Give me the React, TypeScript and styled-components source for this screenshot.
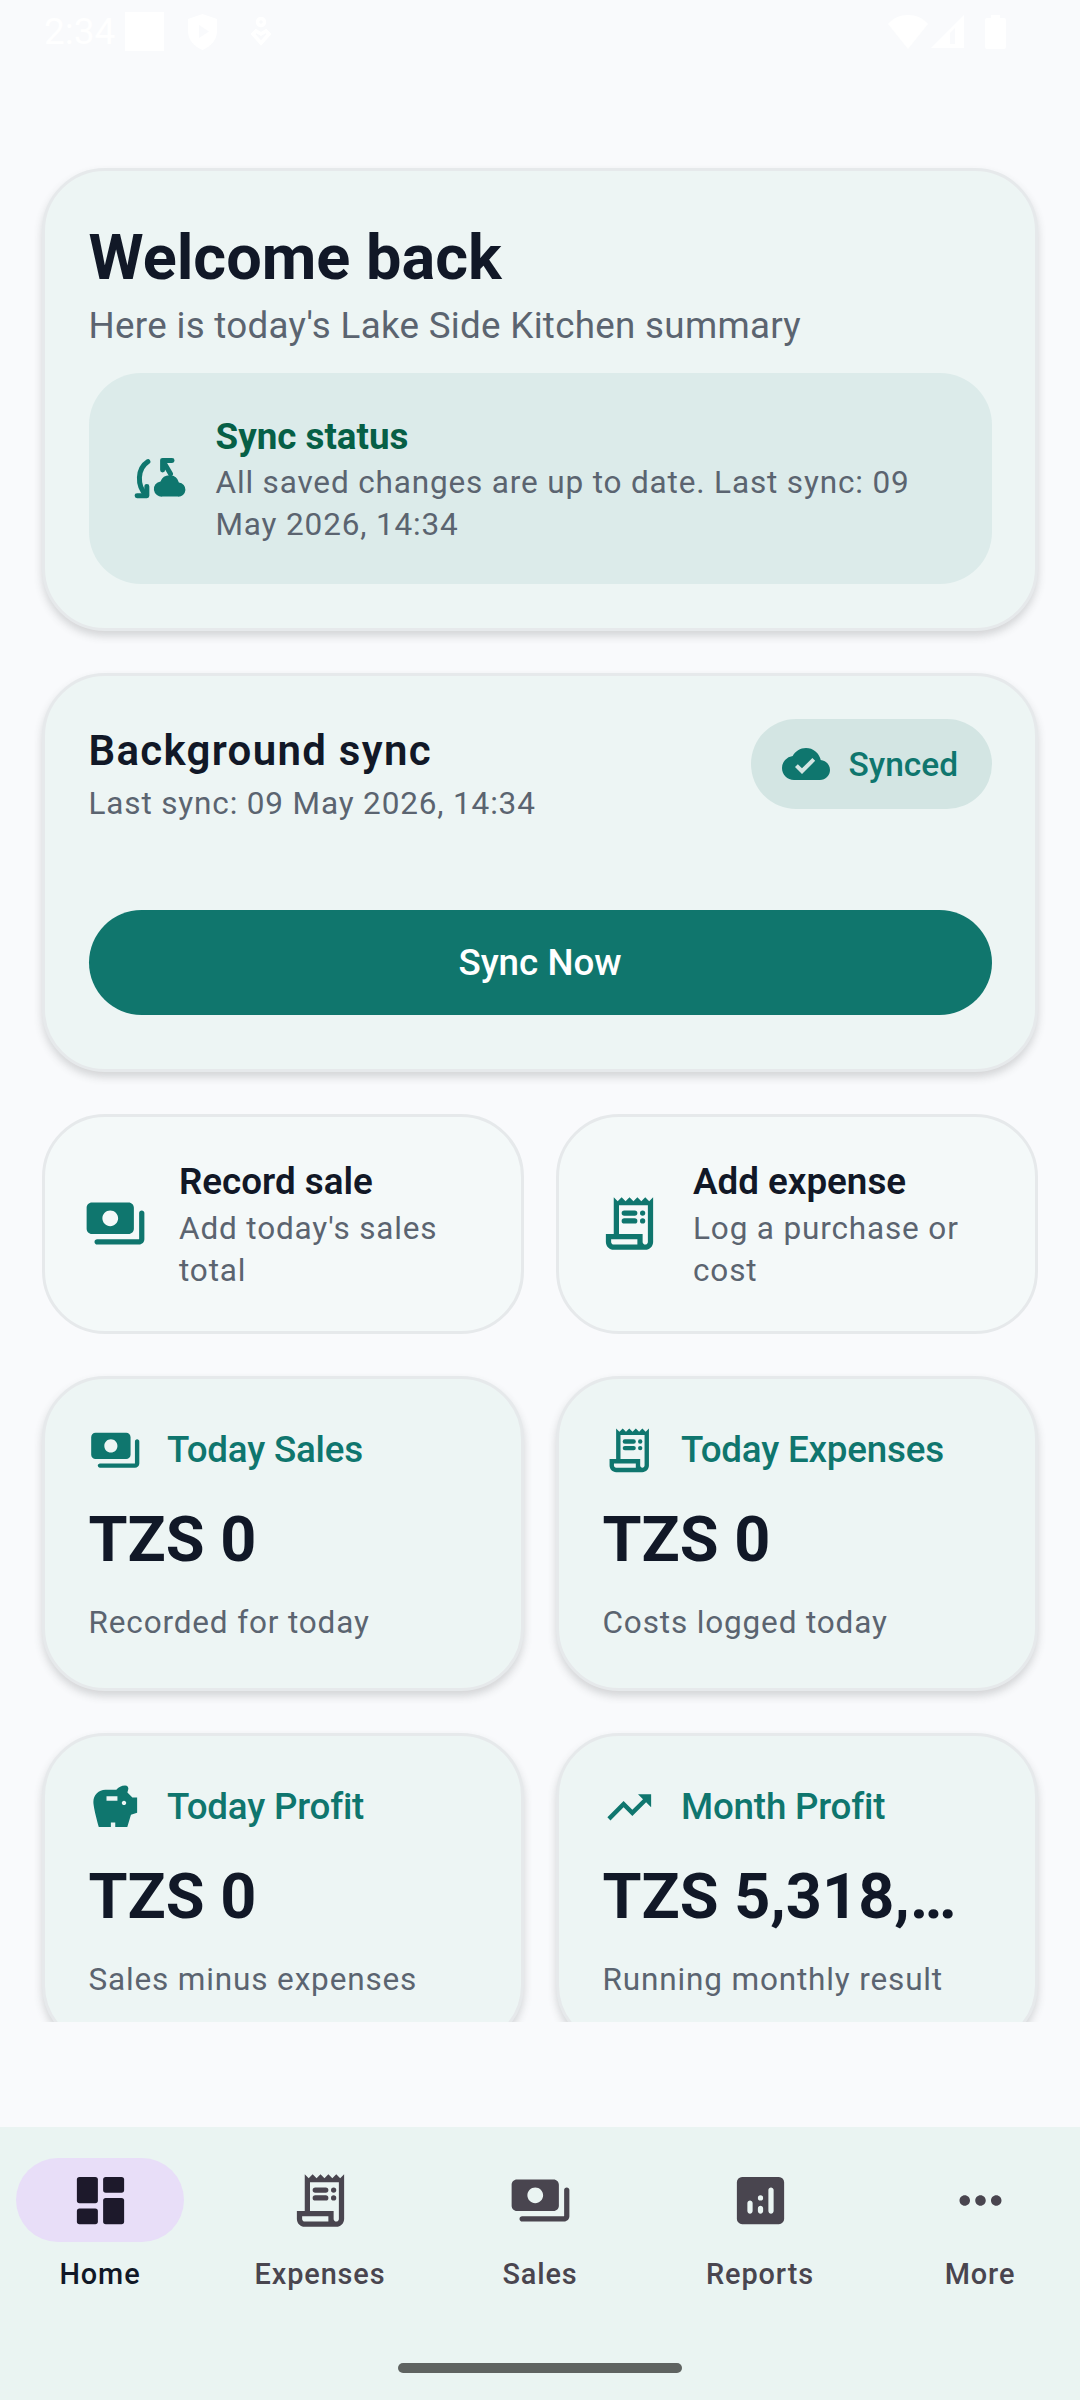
import React from "react";
import styled, { createGlobalStyle } from "styled-components";
import { MdCloudDone, MdMoreHoriz, MdSavings, MdTrendingUp } from "react-icons/md";

const teal = "#0F766E";
const ink = "#111827";
const muted = "#5B6470";
const navInk = "#49454F";

const GlobalStyle = createGlobalStyle`
  html, body {
    margin: 0;
    padding: 0;
    background: #f9fafc;
    font-family: Roboto, "Noto Sans", sans-serif;
  }
  * {
    box-sizing: border-box;
  }
  svg {
    flex-shrink: 0;
  }
`;

type IconProps = { size?: number };

const PaymentsIcon = ({ size = 63 }: IconProps) => (
  <svg width={size} height={size} viewBox="0 0 24 24" fill="currentColor">
    <path d="M19 14V6c0-1.1-.9-2-2-2H3c-1.1 0-2 .9-2 2v8c0 1.1.9 2 2 2h14c1.1 0 2-.9 2-2zm-9-1c-1.66 0-3-1.34-3-3s1.34-3 3-3 3 1.34 3 3-1.34 3-3 3zM23 8v10c0 1.1-.9 2-2 2H5c-.55 0-1-.45-1-1s.45-1 1-1h16V8c0-.55.45-1 1-1s1 .45 1 1z" />
  </svg>
);

const ReceiptIcon = ({ size = 63 }: IconProps) => (
  <svg width={size} height={size} viewBox="0 0 24 24" fill="currentColor">
    <path d="M19.5 3.5 18 2l-1.5 1.5L15 2l-1.5 1.5L12 2l-1.5 1.5L9 2 7.5 3.5 6 2v14H3v3c0 1.66 1.34 3 3 3h12c1.66 0 3-1.34 3-3V2l-1.5 1.5zM15 20H6c-.55 0-1-.45-1-1v-1h10v3zm4-1c0 .55-.45 1-1 1s-1-.45-1-1v-3H8V5h11v14z" />
    <rect x="9" y="7" width="6" height="2" rx="1" />
    <circle cx="17" cy="8" r="1" />
    <rect x="9" y="10" width="6" height="2" rx="1" />
    <circle cx="17" cy="11" r="1" />
  </svg>
);

const SyncCloudIcon = ({ size = 63 }: IconProps) => (
  <svg width={size} height={size} viewBox="0 0 24 24" fill="none" stroke="currentColor" strokeWidth="1.9" strokeLinecap="round" strokeLinejoin="round">
    <path d="M7.2 5.6C3.2 8.2 2.8 14.6 6.6 18.4" />
    <path d="M3.1 18.6h3.7v-3.6" />
    <path d="M16.4 5.1h-3.6v3.7M12.9 5.2l2.9 5" />
    <path d="M12.8 18.9h5.8a2.7 2.7 0 0 0 .4-5.4 3.7 3.7 0 0 0-7-.4 2.9 2.9 0 0 0 .8 5.8z" fill="currentColor" stroke="none" />
  </svg>
);

const DashboardIcon = ({ size = 63 }: IconProps) => (
  <svg width={size} height={size} viewBox="0 0 24 24" fill="currentColor">
    <rect x="3" y="3" width="8" height="10" rx="1" />
    <rect x="3" y="15" width="8" height="6" rx="1" />
    <rect x="13" y="3" width="8" height="6" rx="1" />
    <rect x="13" y="11" width="8" height="10" rx="1" />
  </svg>
);

const AnalyticsIcon = ({ size = 63 }: IconProps) => (
  <svg width={size} height={size} viewBox="0 0 24 24" fill="currentColor">
    <path
      fillRule="evenodd"
      d="M5 3h14a2 2 0 0 1 2 2v14a2 2 0 0 1-2 2H5a2 2 0 0 1-2-2V5a2 2 0 0 1 2-2zm3 9c-.5 0-1 .4-1 1v3c0 .6.5 1 1 1s1-.4 1-1v-3c0-.6-.5-1-1-1zm4 2c-.5 0-1 .4-1 1v1c0 .6.5 1 1 1s1-.4 1-1v-1c0-.6-.5-1-1-1zm0-4a1 1 0 1 0 0 2 1 1 0 0 0 0-2zm4-3c-.5 0-1 .4-1 1v8c0 .6.5 1 1 1s1-.4 1-1V8c0-.6-.5-1-1-1z"
    />
  </svg>
);

const Screen = styled.div`
  width: 1080px;
  height: 2400px;
  display: flex;
  flex-direction: column;
  overflow: hidden;
  background: #f9fafc;
`;

const StatusBar = styled.div`
  height: 63px;
  flex-shrink: 0;
  padding: 0 74px 0 44px;
  display: flex;
  align-items: center;
  justify-content: space-between;
  color: #ffffff;
`;

const StatusGroup = styled.div<{ $gap: number }>`
  display: flex;
  align-items: center;
  gap: ${(p) => p.$gap}px;
`;

const StatusTime = styled.span`
  font-size: 37px;
  font-weight: 400;
  line-height: 44px;
`;

const StatusSquare = styled.div`
  width: 39px;
  height: 39px;
  background: #ffffff;
`;

const StatusFigure = styled.svg`
  margin-left: 10px;
`;

const StatusSignal = styled.svg`
  margin-right: 18px;
`;

const Content = styled.main`
  height: 1959px;
  flex-shrink: 0;
  overflow: hidden;
  padding: 105px 42px 0;
  display: flex;
  flex-direction: column;
  gap: 42px;
`;

const Card = styled.section`
  background: #edf5f4;
  border: 3px solid #e6e9eb;
  border-radius: 63px;
  box-shadow: 0 5px 8px rgba(60, 64, 67, 0.2);
  flex-shrink: 0;
`;

const WelcomeCard = styled(Card)`
  padding: 43.5px 43.5px 43.5px;
`;

const Title = styled.h1`
  margin: 0;
  font-size: 63px;
  line-height: 85.5px;
  font-weight: 700;
  color: ${ink};
`;

const Subtitle = styled.p`
  margin: 0 0 21px;
  font-size: 36.75px;
  line-height: 52px;
  letter-spacing: 0.3px;
  color: ${muted};
`;

const StatusPanel = styled.div`
  height: 211px;
  background: #dcebea;
  border-radius: 52px;
  padding: 0 42px 0 40px;
  display: flex;
  align-items: center;
  gap: 24px;
  color: ${teal};
`;

const StatusTitle = styled.div`
  font-size: 36.75px;
  line-height: 50px;
  font-weight: 700;
  color: #065f46;
`;

const StatusText = styled.div`
  font-size: 31.5px;
  line-height: 42px;
  letter-spacing: 0.85px;
  color: ${muted};
`;

const SyncCard = styled(Card)`
  padding: 43.5px 43.5px 53.5px;
  height: 399px;
  display: flex;
  flex-direction: column;
  justify-content: space-between;
`;

const SyncHeader = styled.div`
  display: flex;
  justify-content: space-between;
  align-items: flex-start;
`;

const SyncHeading = styled.h2`
  margin: 0;
  padding-top: 4px;
  font-size: 42px;
  line-height: 56px;
  font-weight: 600;
  letter-spacing: 1.3px;
  color: ${ink};
`;

const SyncMeta = styled.div`
  margin-top: 3.5px;
  font-size: 31.5px;
  line-height: 42px;
  letter-spacing: 0.85px;
  color: ${muted};
`;

const Badge = styled.div`
  height: 90px;
  padding: 0 0 0 31px;
  width: 241px;
  border-radius: 45px;
  background: #d3e5e3;
  color: ${teal};
  display: flex;
  align-items: center;
  gap: 19px;
  font-size: 33.5px;
  font-weight: 500;
`;

const SyncButton = styled.button`
  height: 105px;
  width: 100%;
  border: 0;
  border-radius: 53px;
  background: #10766d;
  color: #ffffff;
  font-family: inherit;
  font-size: 36.75px;
  font-weight: 500;
`;

const TwoColumns = styled.div`
  display: grid;
  grid-template-columns: 1fr 1fr;
  gap: 32px;
  flex-shrink: 0;
`;

const ActionCard = styled.div`
  height: 220.5px;
  background: #f4f9f9;
  border: 3px solid #e6e9eb;
  border-radius: 63px;
  padding: 0 30px 0 39px;
  display: flex;
  align-items: center;
  gap: 32px;
  color: ${teal};
`;

const ActionTitle = styled.div`
  font-size: 36.75px;
  line-height: 53px;
  font-weight: 600;
  color: ${ink};
`;

const ActionText = styled.div`
  font-size: 31.5px;
  line-height: 42px;
  letter-spacing: 0.85px;
  color: ${muted};
`;

const StatCard = styled(Card)`
  height: 315px;
  padding: 45px 43.5px 0;
  min-width: 0;
`;

const StatHead = styled.div`
  display: flex;
  align-items: center;
  gap: 26px;
  color: ${teal};
  font-size: 36.75px;
  line-height: 52px;
  font-weight: 500;
  letter-spacing: -0.2px;
`;

const StatValue = styled.div`
  margin-top: 21.5px;
  font-size: 63px;
  line-height: 84px;
  font-weight: 700;
  color: ${ink};
  white-space: nowrap;
`;

const StatText = styled.div`
  margin-top: 20px;
  font-size: 31.5px;
  line-height: 42px;
  letter-spacing: 0.85px;
  color: ${muted};
`;

const Spacer = styled.div`
  flex: 1;
`;

const NavBar = styled.nav`
  height: 273px;
  flex-shrink: 0;
  background: #eaf4f2;
  padding-top: 31px;
  display: flex;
  flex-direction: column;
  align-items: stretch;
`;

const NavItems = styled.div`
  display: grid;
  grid-template-columns: repeat(5, 220px);
  justify-content: center;
`;

const NavItem = styled.div<{ $active?: boolean }>`
  display: flex;
  flex-direction: column;
  align-items: center;
  color: ${(p) => (p.$active ? "#1D192B" : navInk)};
`;

const NavIconWrap = styled.div<{ $active?: boolean }>`
  width: 168px;
  height: 84px;
  border-radius: 42px;
  display: flex;
  align-items: center;
  justify-content: center;
  background: ${(p) => (p.$active ? "#E8DEF8" : "transparent")};
`;

const NavLabel = styled.div<{ $active?: boolean }>`
  margin-top: 11px;
  font-size: 28.875px;
  line-height: 42px;
  font-weight: 500;
  letter-spacing: 0.9px;
  color: ${(p) => (p.$active ? ink : navInk)};
`;

const HomeBar = styled.div`
  width: 284px;
  height: 10px;
  border-radius: 5px;
  background: #5f6361;
  margin: 68px auto 0;
`;

const stats = [
  { icon: <PaymentsIcon size={52.5} />, label: "Today Sales", value: "TZS 0", text: "Recorded for today" },
  { icon: <ReceiptIcon size={52.5} />, label: "Today Expenses", value: "TZS 0", text: "Costs logged today" },
  { icon: <MdSavings size={52.5} />, label: "Today Profit", value: "TZS 0", text: "Sales minus expenses" },
  { icon: <MdTrendingUp size={52.5} />, label: "Month Profit", value: "TZS 5,318,…", text: "Running monthly result" },
];

const navItems = [
  { icon: <DashboardIcon />, label: "Home", active: true },
  { icon: <ReceiptIcon />, label: "Expenses" },
  { icon: <PaymentsIcon />, label: "Sales" },
  { icon: <AnalyticsIcon />, label: "Reports" },
  { icon: <MdMoreHoriz size={63} />, label: "More" },
];

export default function App() {
  return (
    <Screen>
      <GlobalStyle />
      <StatusBar>
        <StatusGroup $gap={24}>
          <StatusGroup $gap={10}>
            <StatusTime>2:34</StatusTime>
            <StatusSquare />
          </StatusGroup>
          <svg width="29" height="36" viewBox="0 0 29 36" fill="#fff">
            <path fillRule="evenodd" d="M14.5 0 29 5v12c0 9-6 15.500-14.500 19C6 32.500 0 26 0 17V5zM11 11v13l10-6.500z" />
          </svg>
          <StatusFigure width="20" height="30" viewBox="0 0 20 30" fill="none" stroke="#fff" strokeWidth="3.500">
            <circle cx="10" cy="5" r="3.500" />
            <path d="M2 17l3-3 5 3 5-3 3 3-8 9z" />
          </StatusFigure>
        </StatusGroup>
        <StatusGroup $gap={3}>
          <svg width="40" height="34" viewBox="0 0 40 34" fill="#fff">
            <path d="M0 9C5 3 12 0 20 0s15 3 20 9L20 34z" />
          </svg>
          <StatusSignal width="33" height="34" viewBox="0 0 33 34" fill="#fff">
            <path fillRule="evenodd" d="M33 0v33H0zM24 13l-5 5v11h5z" />
          </StatusSignal>
          <svg width="21" height="34" viewBox="0 0 21 34" fill="#fff">
            <path d="M6 0h9v3h4a2 2 0 0 1 2 2v27a2 2 0 0 1-2 2H2a2 2 0 0 1-2-2V5a2 2 0 0 1 2-2h4z" />
          </svg>
        </StatusGroup>
      </StatusBar>
      <Content>
        <WelcomeCard>
          <Title>Welcome back</Title>
          <Subtitle>Here is today's Lake Side Kitchen summary</Subtitle>
          <StatusPanel>
            <SyncCloudIcon />
            <div>
              <StatusTitle>Sync status</StatusTitle>
              <StatusText>All saved changes are up to date. Last sync: 09 May 2026, 14:34</StatusText>
            </div>
          </StatusPanel>
        </WelcomeCard>
        <SyncCard>
          <SyncHeader>
            <div>
              <SyncHeading>Background sync</SyncHeading>
              <SyncMeta>Last sync: 09 May 2026, 14:34</SyncMeta>
            </div>
            <Badge>
              <MdCloudDone size={48} />
              Synced
            </Badge>
          </SyncHeader>
          <SyncButton>Sync Now</SyncButton>
        </SyncCard>
        <TwoColumns>
          <ActionCard>
            <PaymentsIcon />
            <div>
              <ActionTitle>Record sale</ActionTitle>
              <ActionText>Add today's sales total</ActionText>
            </div>
          </ActionCard>
          <ActionCard>
            <ReceiptIcon />
            <div>
              <ActionTitle>Add expense</ActionTitle>
              <ActionText>Log a purchase or cost</ActionText>
            </div>
          </ActionCard>
        </TwoColumns>
        <TwoColumns>
          {stats.slice(0, 2).map((s) => (
            <StatCard key={s.label}>
              <StatHead>
                {s.icon}
                {s.label}
              </StatHead>
              <StatValue>{s.value}</StatValue>
              <StatText>{s.text}</StatText>
            </StatCard>
          ))}
        </TwoColumns>
        <TwoColumns>
          {stats.slice(2).map((s) => (
            <StatCard key={s.label}>
              <StatHead>
                {s.icon}
                {s.label}
              </StatHead>
              <StatValue>{s.value}</StatValue>
              <StatText>{s.text}</StatText>
            </StatCard>
          ))}
        </TwoColumns>
      </Content>
      <Spacer />
      <NavBar>
        <NavItems>
          {navItems.map((n) => (
            <NavItem key={n.label} $active={n.active}>
              <NavIconWrap $active={n.active}>{n.icon}</NavIconWrap>
              <NavLabel $active={n.active}>{n.label}</NavLabel>
            </NavItem>
          ))}
        </NavItems>
        <HomeBar />
      </NavBar>
    </Screen>
  );
}
